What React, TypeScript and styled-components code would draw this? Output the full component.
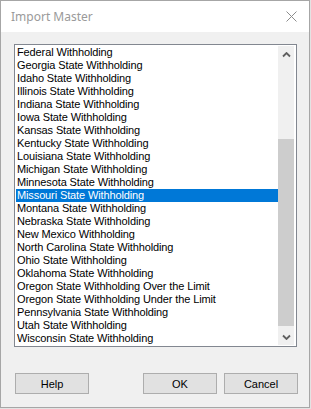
import React from 'react';
import styled, { createGlobalStyle } from 'styled-components';

/* -------------------------------------------------------------------------- */
/*                                    Data                                    */
/* -------------------------------------------------------------------------- */

const items = [
  'Federal Withholding',
  'Georgia State Withholding',
  'Idaho State Withholding',
  'Illinois State Withholding',
  'Indiana State Withholding',
  'Iowa State Withholding',
  'Kansas State Withholding',
  'Kentucky State Withholding',
  'Louisiana State Withholding',
  'Michigan State Withholding',
  'Minnesota State Withholding',
  'Missouri State Withholding',
  'Montana State Withholding',
  'Nebraska State Withholding',
  'New Mexico Withholding',
  'North Carolina State Withholding',
  'Ohio State Withholding',
  'Oklahoma State Withholding',
  'Oregon State Withholding Over the Limit',
  'Oregon State Withholding Under the Limit',
  'Pennsylvania State Withholding',
  'Utah State Withholding',
  'Wisconsin State Withholding',
];

const SELECTED = 'Missouri State Withholding';

/* -------------------------------------------------------------------------- */
/*                                  Component                                 */
/* -------------------------------------------------------------------------- */

const Chevron = ({ down }: { down?: boolean }) => (
  <svg width="9" height="6" viewBox="0 0 9 6">
    <path
      d={down ? 'M1 1.5 L4.5 5 L8 1.5' : 'M1 4.5 L4.5 1 L8 4.5'}
      fill="none"
      stroke="#606060"
      strokeWidth="1.8"
    />
  </svg>
);

const App = () => (
  <>
    <GlobalStyle />
    <Window>
      <TitleBar>
        <Title>Import Master</Title>
        <CloseButton>
          <svg width="11" height="11" viewBox="0 0 11 11">
            <path d="M0.5 0.5 L10.5 10.5 M10.5 0.5 L0.5 10.5" stroke="#8c8c8c" strokeWidth="1" />
          </svg>
        </CloseButton>
      </TitleBar>

      <Body>
        <ListBox>
          <Items>
            {items.map((item) => (
              <Row key={item} selected={item === SELECTED}>
                {item}
              </Row>
            ))}
          </Items>
          <ScrollBar>
            <ArrowButton>
              <Chevron />
            </ArrowButton>
            <Track>
              <Thumb />
            </Track>
            <ArrowButton>
              <Chevron down />
            </ArrowButton>
          </ScrollBar>
        </ListBox>

        <ButtonRow>
          <Button>Help</Button>
          <Spacer />
          <Button>OK</Button>
          <Button>Cancel</Button>
        </ButtonRow>
      </Body>
    </Window>
  </>
);

/* -------------------------------------------------------------------------- */
/*                                    STYLES                                  */
/* -------------------------------------------------------------------------- */

const GlobalStyle = createGlobalStyle`
  html, body {
    margin: 0;
    padding: 0;
    background: #e3e3e3;
  }
  body {
    font-family: "Liberation Sans", Arial, sans-serif;
  }
`;

const Window = styled.div`
  width: 310px;
  height: 408px;
  box-sizing: border-box;
  border: 1px solid #a6a6a6;
  background: #f0f0f0;
  display: flex;
  flex-direction: column;
`;

const TitleBar = styled.div`
  height: 31px;
  background: #ffffff;
  display: flex;
  align-items: center;
  justify-content: space-between;
  padding: 0 10px 0 10px;
`;

const Title = styled.span`
  font-family: "Noto Sans", "Open Sans", sans-serif;
  font-size: 12px;
  color: #9a9a9a;
  margin-top: -1px;
`;

const CloseButton = styled.span`
  display: flex;
  width: 11px;
  height: 11px;
  margin-right: 2px;
  margin-top: -1px;
`;

const Body = styled.div`
  flex: 1;
  padding: 12px 11px 0 13px;
  display: flex;
  flex-direction: column;
`;

const ListBox = styled.div`
  width: 283px;
  height: 303px;
  box-sizing: border-box;
  border: 1px solid #828790;
  background: #ffffff;
  padding: 1px 2px 1px 1px;
  display: flex;
`;

const Items = styled.div`
  flex: 1;
  display: flex;
  flex-direction: column;
  overflow: hidden;
`;

const Row = styled.div<{ selected?: boolean }>`
  height: 13px;
  line-height: 13px;
  padding-left: 1px;
  font-size: 11px;
  letter-spacing: -0.12px;
  white-space: nowrap;
  color: ${(p) => (p.selected ? '#ffffff' : '#000000')};
  background: ${(p) => (p.selected ? '#0078d7' : 'transparent')};
`;

const ScrollBar = styled.div`
  width: 16px;
  background: #f0f0f0;
  display: flex;
  flex-direction: column;
`;

const ArrowButton = styled.div`
  height: 17px;
  display: flex;
  align-items: center;
  justify-content: center;
`;

const Track = styled.div`
  flex: 1;
  display: flex;
  flex-direction: column;
  padding: 76px 0 2px;
`;

const Thumb = styled.div`
  flex: 1;
  background: #cdcdcd;
`;

const ButtonRow = styled.div`
  margin-top: 26px;
  display: flex;
  gap: 7px;
  padding-left: 1px;
`;

const Spacer = styled.div`
  flex: 1;
`;

const Button = styled.button`
  width: 74px;
  height: 21px;
  box-sizing: border-box;
  border: 1px solid #adadad;
  background: #e1e1e1;
  font-family: "Liberation Sans", Arial, sans-serif;
  font-size: 11px;
  color: #000000;
  padding: 0;
`;

export default App;
